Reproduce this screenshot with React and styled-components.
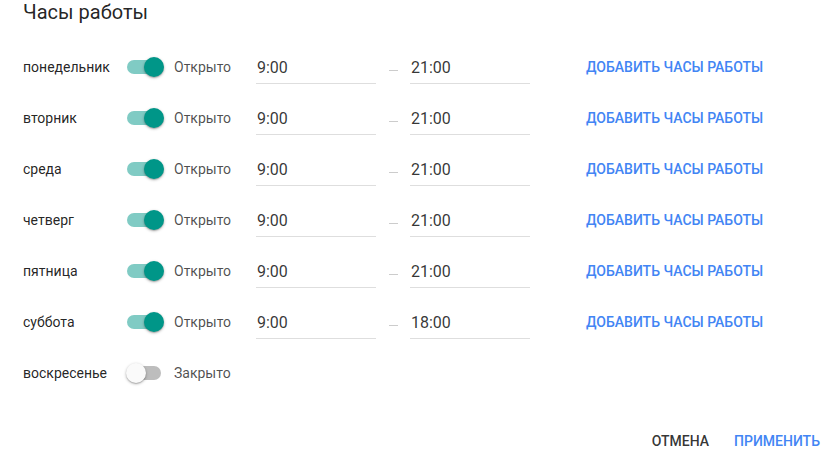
import styled, { createGlobalStyle } from "styled-components";

const GlobalStyle = createGlobalStyle`
  body {
    margin: 0;
    background: #fff;
    font-family: Roboto, "Liberation Sans", sans-serif;
  }
`;

const Dialog = styled.div`
  width: 829px;
  height: 462px;
  box-sizing: border-box;
  display: flex;
  flex-direction: column;
`;

const Title = styled.h2`
  margin: 0;
  padding: 0 23px;
  height: 41px;
  line-height: 25px;
  font-size: 20px;
  font-weight: 400;
  color: rgba(0, 0, 0, 0.87);
`;

const List = styled.div`
  padding: 0 23px;
  display: flex;
  flex-direction: column;
`;

const Row = styled.div`
  height: 51px;
  display: flex;
  align-items: center;
`;

const Day = styled.span`
  width: 104px;
  font-size: 14px;
  color: rgba(0, 0, 0, 0.87);
`;

const Track = styled.span`
  position: relative;
  width: 34px;
  height: 14px;
  border-radius: 7px;
  background: ${(p) => (p.$on ? "#80cbc4" : "#bdbdbd")};
  margin-right: 13px;
`;

const Thumb = styled.span`
  position: absolute;
  top: -3px;
  left: ${(p) => (p.$on ? "17px" : "-1px")};
  width: 20px;
  height: 20px;
  border-radius: 50%;
  background: ${(p) => (p.$on ? "#009688" : "#fafafa")};
  box-shadow: 0 1px 3px rgba(0, 0, 0, 0.3), 0 1px 1px rgba(0, 0, 0, 0.14);
`;

const State = styled.span`
  width: 82px;
  font-size: 14px;
  color: rgba(0, 0, 0, 0.7);
`;

const Field = styled.div`
  width: 120px;
  height: 30px;
  margin-top: 4px;
  padding-top: 2px;
  box-sizing: border-box;
  border-bottom: 1px solid rgba(0, 0, 0, 0.13);
  font-size: 16px;
  line-height: 24px;
  padding-left: 1px;
  color: rgba(0, 0, 0, 0.8);
`;

const Dash = styled.span`
  width: 34px;
  display: flex;
  justify-content: center;
  padding-top: 8px;
  &::before {
    content: "";
    width: 9px;
    height: 1px;
    background: rgba(0, 0, 0, 0.2);
  }
`;

const TextButton = styled.button`
  border: 0;
  background: none;
  padding: 8px 0;
  font-family: inherit;
  font-size: 14px;
  font-weight: 500;
  text-transform: uppercase;
  color: ${(p) => (p.$muted ? "rgba(0, 0, 0, 0.8)" : "#4285f4")};
  cursor: pointer;
`;

const AddButton = styled(TextButton)`
  margin-left: 56px;
`;

const Footer = styled.div`
  margin-top: 27px;
  padding-right: 9px;
  display: flex;
  justify-content: flex-end;
  gap: 25px;
`;

const days = [
  { name: "понедельник", open: true, from: "9:00", to: "21:00" },
  { name: "вторник", open: true, from: "9:00", to: "21:00" },
  { name: "среда", open: true, from: "9:00", to: "21:00" },
  { name: "четверг", open: true, from: "9:00", to: "21:00" },
  { name: "пятница", open: true, from: "9:00", to: "21:00" },
  { name: "суббота", open: true, from: "9:00", to: "18:00" },
  { name: "воскресенье", open: false },
];

export default function App() {
  return (
    <>
      <GlobalStyle />
      <Dialog>
        <Title>Часы работы</Title>
        <List>
          {days.map((d) => (
            <Row key={d.name}>
              <Day>{d.name}</Day>
              <Track $on={d.open}>
                <Thumb $on={d.open} />
              </Track>
              <State>{d.open ? "Открыто" : "Закрыто"}</State>
              {d.open && (
                <>
                  <Field>{d.from}</Field>
                  <Dash />
                  <Field>{d.to}</Field>
                  <AddButton>Добавить часы работы</AddButton>
                </>
              )}
            </Row>
          ))}
        </List>
        <Footer>
          <TextButton $muted>Отмена</TextButton>
          <TextButton>Применить</TextButton>
        </Footer>
      </Dialog>
    </>
  );
}
